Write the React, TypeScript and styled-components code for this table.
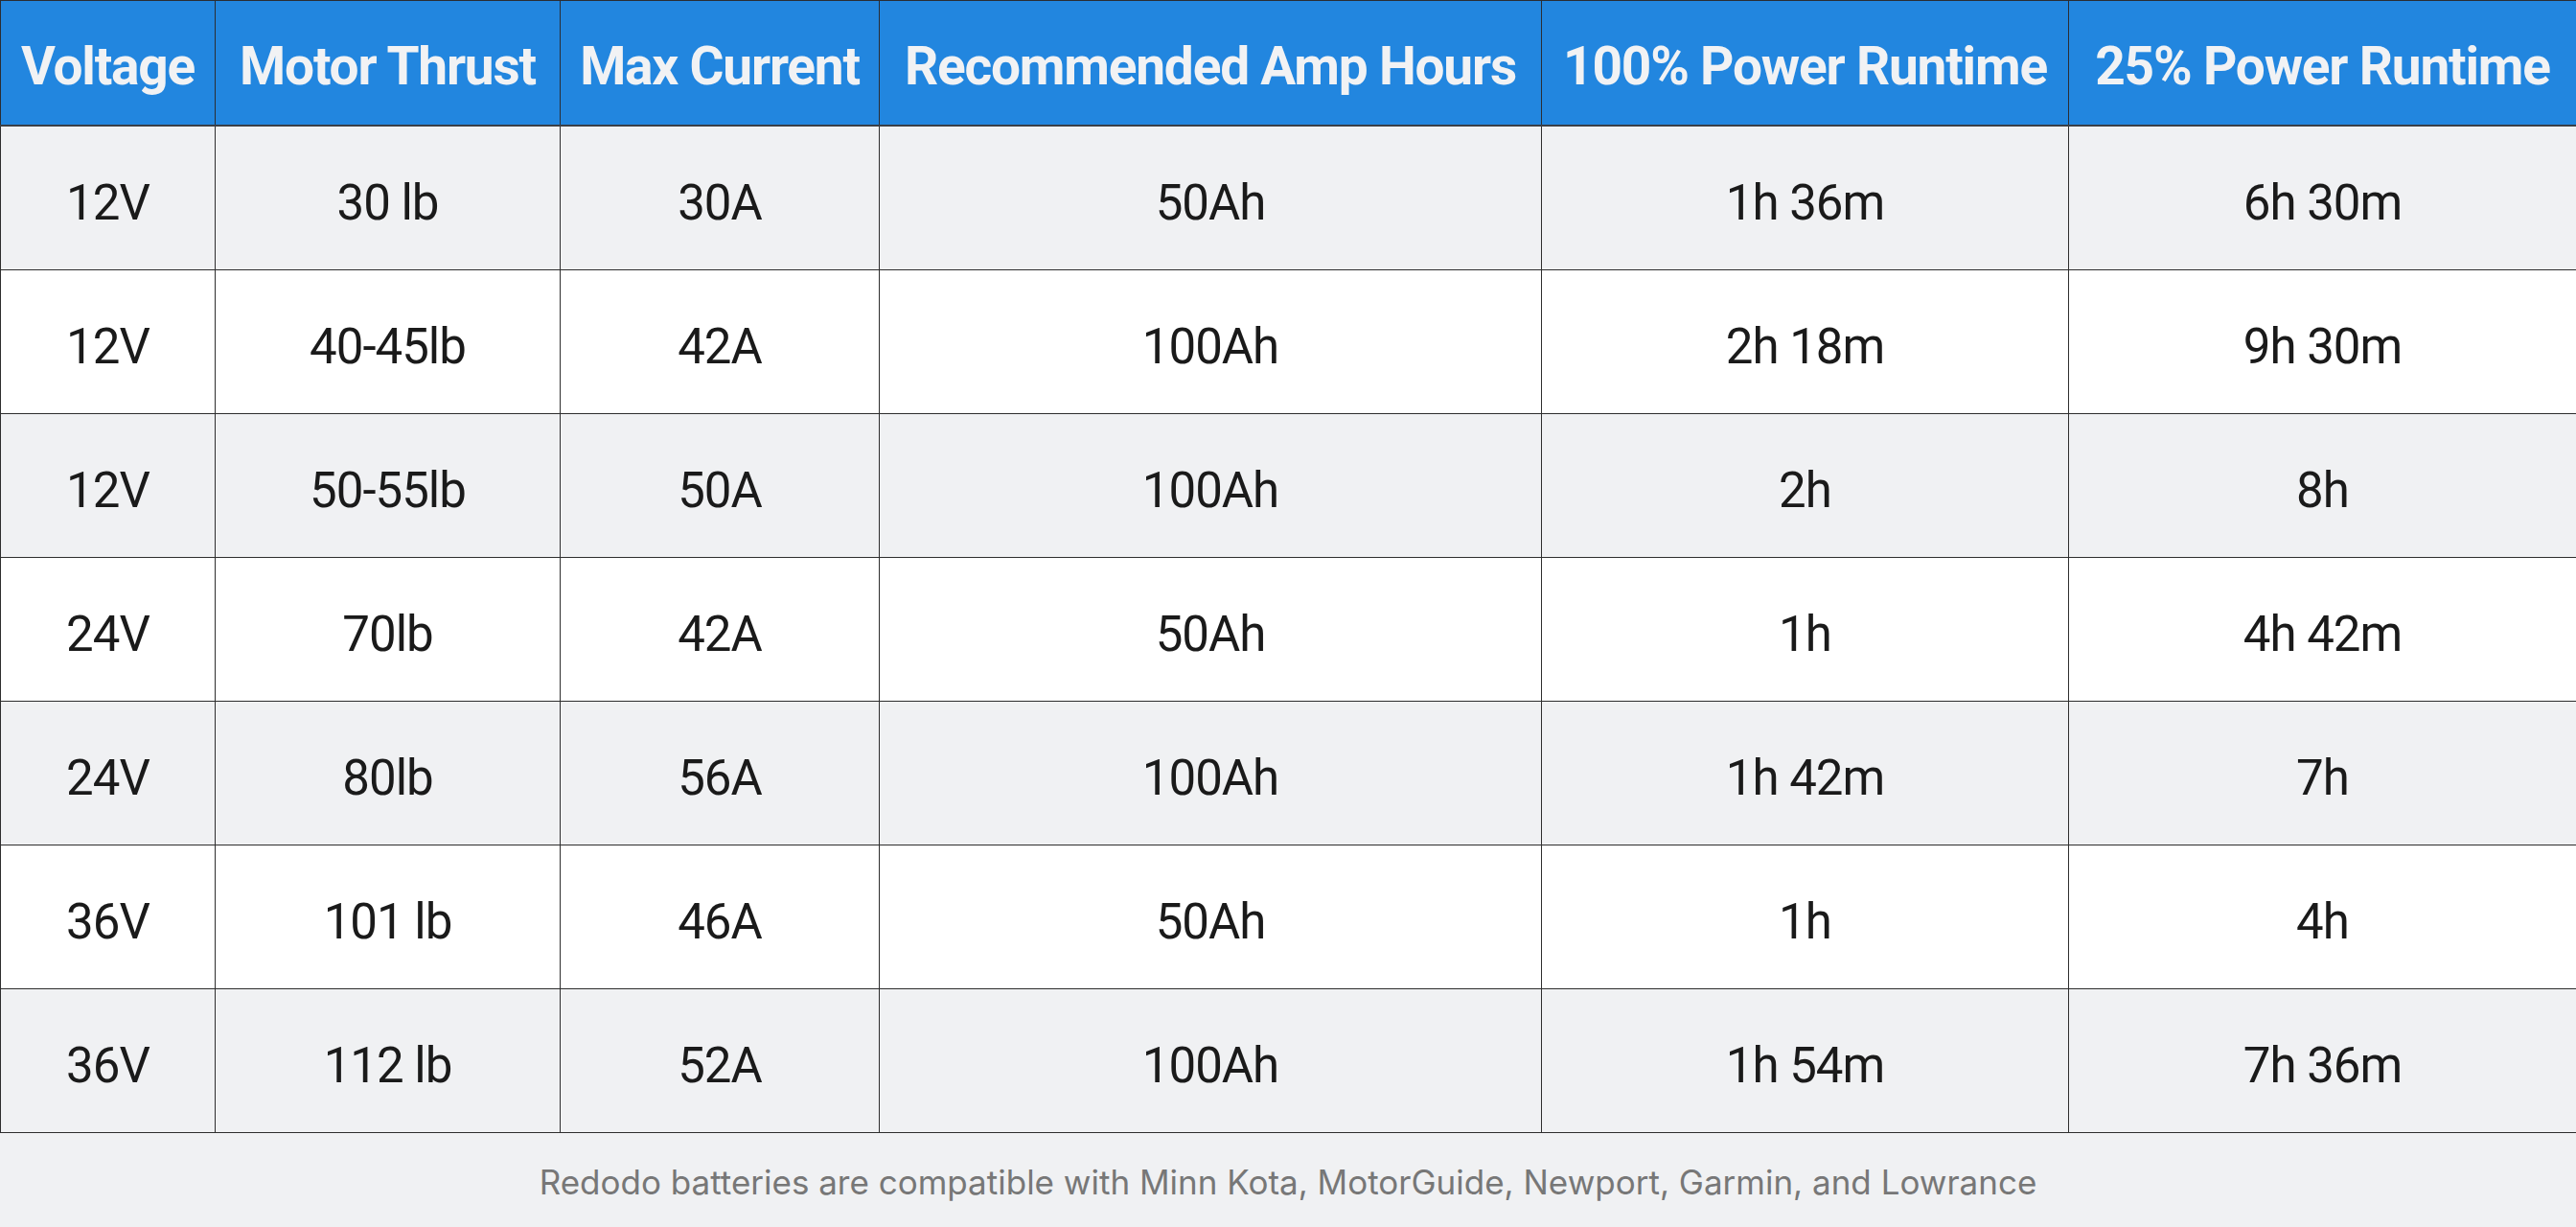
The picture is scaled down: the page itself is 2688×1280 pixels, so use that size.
import React from 'react';
import styled, { createGlobalStyle } from 'styled-components';

const GlobalStyle = createGlobalStyle`
  html, body {
    margin: 0;
    padding: 0;
    background: #f0f1f3;
  }
  body {
    font-family: Roboto, 'Liberation Sans', sans-serif;
  }
`;

const Page = styled.div`
  width: 2688px;
  height: 1280px;
  display: flex;
  flex-direction: column;
  background: #f0f1f3;
`;

const Table = styled.table`
  width: 100%;
  border-collapse: collapse;
  table-layout: fixed;
  border: 1px solid #222;
`;

const HeadCell = styled.th`
  height: 123px;
  padding: 6px 0 0;
  background: #2286df;
  color: #f1f2f4;
  font-size: 55px;
  font-weight: 700;
  letter-spacing: -1.2px;
  text-align: center;
  white-space: nowrap;
  border: 1px solid #2a2d33;
  border-bottom: 2px solid #3a3f47;
`;

const Row = styled.tr<{ $alt: boolean }>`
  background: ${({ $alt }) => ($alt ? '#f0f1f3' : '#ffffff')};
`;

const Cell = styled.td`
  height: 139px;
  padding: 10px 0 0;
  color: #1a1a1a;
  font-size: 51px;
  font-weight: 400;
  letter-spacing: -1px;
  text-align: center;
  white-space: nowrap;
  border: 1px solid #2e2e2e;
`;

const Footer = styled.div`
  flex: 1;
  display: flex;
  align-items: center;
  justify-content: center;
  padding-top: 4px;
  color: #777777;
  font-family: Inter, Roboto, sans-serif;
  font-size: 35px;
`;

const columns = [
  { title: 'Voltage', width: 224 },
  { title: 'Motor Thrust', width: 360 },
  { title: 'Max Current', width: 333 },
  { title: 'Recommended Amp Hours', width: 691 },
  { title: '100% Power Runtime', width: 550 },
  { title: '25% Power Runtime', width: 530 },
];

const rows = [
  ['12V', '30 lb', '30A', '50Ah', '1h 36m', '6h 30m'],
  ['12V', '40-45lb', '42A', '100Ah', '2h 18m', '9h 30m'],
  ['12V', '50-55lb', '50A', '100Ah', '2h', '8h'],
  ['24V', '70lb', '42A', '50Ah', '1h', '4h 42m'],
  ['24V', '80lb', '56A', '100Ah', '1h 42m', '7h'],
  ['36V', '101 lb', '46A', '50Ah', '1h', '4h'],
  ['36V', '112 lb', '52A', '100Ah', '1h 54m', '7h 36m'],
];

export default function App() {
  return (
    <>
      <GlobalStyle />
      <Page>
        <Table>
          <colgroup>
            {columns.map((c) => (
              <col key={c.title} style={{ width: c.width }} />
            ))}
          </colgroup>
          <thead>
            <tr>
              {columns.map((c) => (
                <HeadCell key={c.title}>{c.title}</HeadCell>
              ))}
            </tr>
          </thead>
          <tbody>
            {rows.map((r, i) => (
              <Row key={i} $alt={i % 2 === 0}>
                {r.map((v, j) => (
                  <Cell key={j}>{v}</Cell>
                ))}
              </Row>
            ))}
          </tbody>
        </Table>
        <Footer>
          Redodo batteries are compatible with Minn Kota, MotorGuide, Newport, Garmin, and Lowrance
        </Footer>
      </Page>
    </>
  );
}
